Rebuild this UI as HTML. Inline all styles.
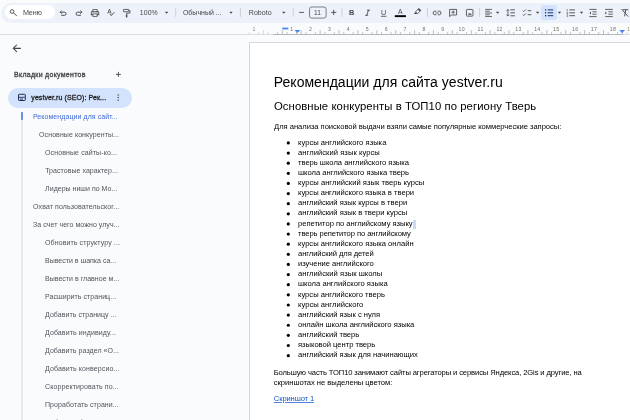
<!DOCTYPE html>
<html lang="ru"><head><meta charset="utf-8"><title>yestver.ru (SEO): Рекомендации</title>
<style>
html,body{margin:0;padding:0}
body{width:630px;height:420px;overflow:hidden;position:relative;background:#f9fbfd;font-family:"Liberation Sans",sans-serif;}
.t{position:absolute;white-space:nowrap;display:block}
#toolbar{position:absolute;left:0.5px;top:3px;width:640px;height:20px;border-radius:10px;background:#edf2fa}
#menu{position:absolute;left:4.5px;top:5px;width:50px;height:14px;border-radius:7px;background:#fff}
#rline{position:absolute;left:0;top:34px;width:630px;height:1px;background:#dadce0}
#rline2{position:absolute;left:273px;top:34px;width:349px;height:1px;background:#b4b8bc}
#page{position:absolute;left:249px;top:42px;width:400px;height:400px;background:#fff;border:1px solid #d4d7db;box-sizing:border-box}
#pill{position:absolute;left:8px;top:87.5px;width:124px;height:20px;border-radius:10px;background:#d3e3fd}
#vline{position:absolute;left:21px;top:112px;width:1.5px;height:320px;background:#e6e9ee}
#vact{position:absolute;left:21px;top:112.2px;width:1.6px;height:8.3px;background:#6f8fe6;border-radius:.5px}
#actbtn{position:absolute;left:541.4px;top:4.8px;width:15.3px;height:15.2px;border-radius:2px;background:#d3e3fd}
#cursor{position:absolute;left:412.6px;top:219.5px;width:3.4px;height:9px;background:#c9dbf8}
svg{position:absolute;left:0;top:0;overflow:visible}
</style></head><body>
<div id="all" style="position:absolute;left:0;top:0;width:630px;height:420px;overflow:hidden;will-change:transform">
<div id="toolbar"></div><div id="menu"></div><div id="actbtn"></div>
<div id="rline"></div><div id="rline2"></div>
<div id="page"></div>
<div id="pill"></div><div id="vline"></div><div id="vact"></div>
<div id="cursor"></div>
<svg width="630" height="420" viewBox="0 0 630 420">
<path d="M249.29 32.2V34.5 M258.73 32.2V34.5 M263.45 30.2V34.5 M268.18 32.2V34.5 M627.09 32.2V34.5" stroke="#c9cdd1" stroke-width="0.7" fill="none"/>
<path d="M277.62 32.2V34.5 M282.34 30.2V34.5 M287.07 32.2V34.5 M296.51 32.2V34.5 M301.23 30.2V34.5 M305.96 32.2V34.5 M315.40 32.2V34.5 M320.12 30.2V34.5 M324.85 32.2V34.5 M334.29 32.2V34.5 M339.01 30.2V34.5 M343.74 32.2V34.5 M353.18 32.2V34.5 M357.90 30.2V34.5 M362.63 32.2V34.5 M372.07 32.2V34.5 M376.79 30.2V34.5 M381.52 32.2V34.5 M390.96 32.2V34.5 M395.68 30.2V34.5 M400.41 32.2V34.5 M409.85 32.2V34.5 M414.57 30.2V34.5 M419.30 32.2V34.5 M428.74 32.2V34.5 M433.46 30.2V34.5 M438.19 32.2V34.5 M447.63 32.2V34.5 M452.36 30.2V34.5 M457.08 32.2V34.5 M466.52 32.2V34.5 M471.25 30.2V34.5 M475.97 32.2V34.5 M485.41 32.2V34.5 M490.13 30.2V34.5 M494.86 32.2V34.5 M504.30 32.2V34.5 M509.02 30.2V34.5 M513.75 32.2V34.5 M523.19 32.2V34.5 M527.91 30.2V34.5 M532.64 32.2V34.5 M542.08 32.2V34.5 M546.81 30.2V34.5 M551.53 32.2V34.5 M560.97 32.2V34.5 M565.69 30.2V34.5 M570.42 32.2V34.5 M579.86 32.2V34.5 M584.59 30.2V34.5 M589.31 32.2V34.5 M598.75 32.2V34.5 M603.47 30.2V34.5 M608.20 32.2V34.5 M617.64 32.2V34.5 M622.37 30.2V34.5" stroke="#a3a7ab" stroke-width="0.7" fill="none"/>
<rect x="282.3" y="27.6" width="6" height="1.8" fill="#4a86f5"/>
<path d="M294.5 30.1H300.4L297.45 32.9Z" fill="#4a86f5"/>
<path d="M619.2 30.0H625.0L622.1 33.3Z" fill="#4a86f5"/>
<circle cx="288.3" cy="142.90" r="1.6" fill="#000"/><circle cx="288.3" cy="153.03" r="1.6" fill="#000"/><circle cx="288.3" cy="163.16" r="1.6" fill="#000"/><circle cx="288.3" cy="173.29" r="1.6" fill="#000"/><circle cx="288.3" cy="183.42" r="1.6" fill="#000"/><circle cx="288.3" cy="193.55" r="1.6" fill="#000"/><circle cx="288.3" cy="203.68" r="1.6" fill="#000"/><circle cx="288.3" cy="213.81" r="1.6" fill="#000"/><circle cx="288.3" cy="223.94" r="1.6" fill="#000"/><circle cx="288.3" cy="234.07" r="1.6" fill="#000"/><circle cx="288.3" cy="244.20" r="1.6" fill="#000"/><circle cx="288.3" cy="254.33" r="1.6" fill="#000"/><circle cx="288.3" cy="264.46" r="1.6" fill="#000"/><circle cx="288.3" cy="274.59" r="1.6" fill="#000"/><circle cx="288.3" cy="284.72" r="1.6" fill="#000"/><circle cx="288.3" cy="294.85" r="1.6" fill="#000"/><circle cx="288.3" cy="304.98" r="1.6" fill="#000"/><circle cx="288.3" cy="315.11" r="1.6" fill="#000"/><circle cx="288.3" cy="325.24" r="1.6" fill="#000"/><circle cx="288.3" cy="335.37" r="1.6" fill="#000"/><circle cx="288.3" cy="345.50" r="1.6" fill="#000"/><circle cx="288.3" cy="355.63" r="1.6" fill="#000"/>
<g fill="none" stroke="#444746" stroke-width="0.95" stroke-linecap="butt" stroke-linejoin="miter">
 <!-- search -->
 <circle cx="12.1" cy="11.5" r="1.85" stroke-width="0.9"/><path d="M13.5 12.9 L16.8 15.9" stroke-width="0.95"/>
 <!-- undo -->
 <path d="M61.7 10.6 L60.1 12.2 L61.7 13.8 M60.4 12.2 H64.5 A1.55 1.55 0 0 1 64.5 15.3 H61.2"/>
 <!-- redo -->
 <path d="M80.4 10.6 L82.0 12.2 L80.4 13.8 M81.7 12.2 H77.6 A1.55 1.55 0 0 0 77.6 15.3 H80.9"/>
 <!-- back arrow sidebar -->
 <path d="M20.9 48.35 H13.5 M16.9 44.75 L13.3 48.35 L16.9 51.95" stroke-width="1.05"/>
 <!-- plus sidebar -->
 <path d="M115.9 74.4 H120.9 M118.4 71.9 V76.9" stroke-width="0.9"/>
 <!-- minus / plus font size -->
 <path d="M299.2 12.4 H303.9 M331.1 12.4 H336.3 M333.7 9.8 V15" stroke-width="0.9"/>
</g>
<g fill="#444746" stroke="none">
 <!-- print -->
 <path transform="translate(89.95 8.0) scale(0.42)" d="M19 8h-1V3H6v5H5c-1.660 0-3 1.340-3 3v6h4v4h12v-4h4v-6c0-1.660-1.340-3-3-3zM8 5h8v3H8V5zm8 12v2H8v-4h8v2zm2-2v-2H6v2H4v-4c0-.550.450-1 1-1h14c.550 0 1 .450 1 1v4h-2z M17 11.500a1 1 0 1 0 2 0a1 1 0 1 0-2 0z"/>
 <!-- spellcheck -->
 <path transform="translate(106.5 8.0) scale(0.35)" d="M12.450 16h2.090L9.430 3H7.570L2.460 16h2.090l1.120-3h5.640l1.140 3zm-6.020-5L8.500 5.480 10.570 11H6.430zm15.160.590l-8.090 8.090L9.830 16l-1.410 1.410 5.090 5.090L23 13l-1.410-1.410z"/>
 <!-- dropdown arrows -->
 <path d="M164.9 11.8h3.4l-1.700 1.900z M229.3 11.800h3.400l-1.700 1.900z M282.100 11.800h3.400l-1.700 1.900z M495.900 11.800h3.400l-1.700 1.900z M535.900 11.800h3.400l-1.700 1.900z M557.800 11.800h3.400l-1.700 1.900z M579.800 11.800h3.400l-1.700 1.900z"/>
 <!-- link -->
 
 <!-- three dots -->
 <circle cx="118.2" cy="94.9" r="0.75"/><circle cx="118.2" cy="97.6" r="0.75"/><circle cx="118.200" cy="100.3" r="0.75"/>
</g>
<!-- separators -->
<g stroke="#c7c7c7" stroke-width="0.8">
 <path d="M175.700 7.900V16.800 M240.400 7.900V16.800 M293.200 7.900V16.800 M341.900 7.900V16.800 M427.500 7.900V16.800 M479.600 7.900V16.800"/>
</g>
<!-- text format icons -->
<g font-family="Liberation Sans, sans-serif" fill="#444746">
 <text x="351.7" y="15.2" font-size="7.3" font-weight="700" text-anchor="middle">B</text>
 <text x="383.6" y="14.7" font-size="7.2" text-anchor="middle">U</text>
 <text x="400.3" y="14.0" font-size="6.8" text-anchor="middle">A</text>
</g>
<g fill="none" stroke="#444746" stroke-width="0.9">
 <!-- format paint -->
 <rect x="123.400" y="9.450" width="5.400" height="2.300" rx="0.4" stroke-width="0.85"/><path d="M128.800 10.600H130.000V13.100H126.600V14.300" stroke-width="0.8"/><rect x="125.900" y="14.300" width="1.450" height="3.200" rx="0.5" fill="#444746" stroke="none"/>
 <!-- italic -->
 <path d="M367.000 10.200H370.000 M365.200 15.300H368.200 M368.500 10.200L366.700 15.300"/>
 <path d="M436.300 11.100h-1.300a1.850 1.850 0 0 0 0 3.700h1.300 M437.800 11.100h1.300a1.850 1.850 0 0 1 0 3.700h-1.300 M435.500 12.950h3.100" stroke-width="0.85"/>
 <!-- underline bar -->
 <path d="M380.900 16.300H386.400" stroke-width="0.8"/>
 <!-- highlighter -->
 <path d="M415.600 11.600 L418.900 8.400 L420.900 10.400 L417.600 13.600 Z" stroke-width="0.75"/><path d="M417.700 9.500 L418.900 8.400 L420.900 10.400 L419.800 11.500 Z M415.400 11.900 L417.400 13.900 L413.900 14.100 Z" fill="#444746" stroke="none"/>
 <!-- add comment -->
 <path d="M449.600 9.400 H456.600 V15.000 H451.400 L449.600 16.600 Z" stroke-width="0.85"/>
 <path d="M451.500 12.200 H454.900 M453.200 10.500 V13.900" stroke-width="0.8"/>
 <!-- image -->
 <rect x="466.450" y="9.450" width="6.500" height="6.700" rx="0.8" stroke-width="0.85"/>
 <path d="M467.800 14.700 L469.100 13.100 L470.000 14.100 L470.800 13.300 L471.800 14.700 Z" fill="#444746" stroke="none"/>
 <!-- align left -->
 <path d="M485.200 9.400H492.000 M485.200 11.200H489.800 M485.200 13.000H492.000 M485.200 14.800H489.800 M485.200 16.500H492.000" stroke-width="0.8"/>
 <!-- line spacing -->
 <path d="M510.400 9.800H514.900 M510.400 12.800H514.900 M510.400 15.800H514.900" stroke-width="0.9"/>
 <path d="M507.900 9.600V16.000 M506.600 10.900L507.900 9.500L509.200 10.900 M506.600 14.700L507.900 16.100L509.200 14.700" stroke-width="0.8"/>
 <!-- checklist -->
 <path d="M527.700 10.700H531.300 M527.700 14.700H531.300" stroke-width="0.9"/>
 <path d="M522.800 10.600L523.800 11.600L526.000 9.400 M522.800 14.600L523.800 15.600L526.000 13.400" stroke-width="0.8"/>
 <!-- numbered list -->
 <path d="M569.400 9.900H575.000 M569.400 12.800H575.000 M569.400 15.700H575.000" stroke-width="0.9"/>
 <path d="M567.200 8.900V11.000 M566.600 12.000H567.700V13.600H566.600 M566.600 14.700H567.700V16.600H566.600" stroke-width="0.55"/>
 <!-- decrease indent -->
 <path d="M589.400 9.400H596.600 M592.400 11.800H596.600 M592.400 14.200H596.600 M589.400 16.600H596.600" stroke-width="0.85"/>
 <path d="M591.000 11.600L589.500 13.000L591.000 14.400Z" fill="#444746" stroke="none"/>
 <!-- increase indent -->
 <path d="M605.200 9.400H612.800 M608.400 11.800H612.800 M608.400 14.200H612.800 M605.200 16.600H612.800" stroke-width="0.85"/>
 <path d="M605.300 11.600L606.800 13.000L605.300 14.400Z" fill="#444746" stroke="none"/>
 <!-- clear formatting -->
 <path d="M623.000 9.700H628.300 M625.800 9.700L624.600 16.300 M621.500 9.000L628.200 16.600" stroke-width="0.9"/>
</g>
<!-- bulleted list (active) -->
<g fill="none" stroke="#041e49" stroke-width="0.9">
 <path d="M547.700 9.900H553.200 M547.700 12.800H553.200 M547.700 15.700H553.200"/>
 <g fill="#041e49" stroke="none"><circle cx="545.6" cy="9.900" r="0.7"/><circle cx="545.600" cy="12.800" r="0.7"/><circle cx="545.600" cy="15.700" r="0.7"/></g>
</g>
<rect x="309.5" y="7.0" width="16.6" height="11.1" rx="2.2" fill="none" stroke="#5f6368" stroke-width="0.8"/>
<!-- text color bar -->
<rect x="394.800" y="15.200" width="11.100" height="1.900" fill="#000"/>
<!-- tab icon in pill -->
<g fill="none" stroke="#1b2f55" stroke-width="0.9">
 <rect x="18.500" y="94.300" width="6.800" height="6.200" rx="0.7" stroke-width="1"/>
 <path d="M19.000 97.300H24.800 M19.800 99.100H23.000" stroke-width="0.9"/>
</g>
</svg>
<div id="txt">
<span class="t" style="left:273.80px;top:73px;font-size:14.0px;line-height:18px;color:#000;letter-spacing:0.019px;">Рекомендации для сайта yestver.ru</span>
<span class="t" style="left:274.00px;top:99px;font-size:11.3px;line-height:15px;color:#000;letter-spacing:0.078px;">Основные конкуренты в ТОП10 по региону Тверь</span>
<span class="t" style="left:274.10px;top:122px;font-size:7.6px;line-height:10px;color:#000;letter-spacing:-0.035px;">Для анализа поисковой выдачи взяли самые популярные коммерческие запросы:</span>
<span class="t" style="left:298.00px;top:138px;font-size:7.6px;line-height:10px;color:#000;letter-spacing:0.027px;">курсы английского языка</span>
<span class="t" style="left:298.00px;top:148px;font-size:7.6px;line-height:10px;color:#000;letter-spacing:0.051px;">английский язык курсы</span>
<span class="t" style="left:298.00px;top:158px;font-size:7.6px;line-height:10px;color:#000;letter-spacing:-0.011px;">тверь школа английского языка</span>
<span class="t" style="left:298.00px;top:168px;font-size:7.6px;line-height:10px;color:#000;letter-spacing:-0.011px;">школа английского языка тверь</span>
<span class="t" style="left:298.00px;top:178px;font-size:7.6px;line-height:10px;color:#000;letter-spacing:0.028px;">курсы английский язык тверь курсы</span>
<span class="t" style="left:298.00px;top:188px;font-size:7.6px;line-height:10px;color:#000;letter-spacing:-0.001px;">курсы английского языка в твери</span>
<span class="t" style="left:298.00px;top:198px;font-size:7.6px;line-height:10px;color:#000;letter-spacing:0.003px;">английский язык курсы в твери</span>
<span class="t" style="left:298.00px;top:208px;font-size:7.6px;line-height:10px;color:#000;letter-spacing:0.003px;">английский язык в твери курсы</span>
<span class="t" style="left:298.00px;top:219px;font-size:7.6px;line-height:10px;color:#000;letter-spacing:-0.029px;">репетитор по английскому языку</span>
<span class="t" style="left:298.00px;top:229px;font-size:7.6px;line-height:10px;color:#000;letter-spacing:-0.075px;">тверь репетитор по английскому</span>
<span class="t" style="left:298.00px;top:239px;font-size:7.6px;line-height:10px;color:#000;letter-spacing:0.007px;">курсы английского языка онлайн</span>
<span class="t" style="left:298.00px;top:249px;font-size:7.6px;line-height:10px;color:#000;letter-spacing:-0.065px;">английский для детей</span>
<span class="t" style="left:298.00px;top:259px;font-size:7.6px;line-height:10px;color:#000;letter-spacing:-0.044px;">изучение английского</span>
<span class="t" style="left:298.00px;top:269px;font-size:7.6px;line-height:10px;color:#000;letter-spacing:0.034px;">английский язык школы</span>
<span class="t" style="left:298.00px;top:279px;font-size:7.6px;line-height:10px;color:#000;letter-spacing:0.013px;">школа английского языка</span>
<span class="t" style="left:298.00px;top:290px;font-size:7.6px;line-height:10px;color:#000;letter-spacing:0.002px;">курсы английского тверь</span>
<span class="t" style="left:298.00px;top:300px;font-size:7.6px;line-height:10px;color:#000;letter-spacing:0.023px;">курсы английского</span>
<span class="t" style="left:298.00px;top:310px;font-size:7.6px;line-height:10px;color:#000;letter-spacing:-0.014px;">английский язык с нуля</span>
<span class="t" style="left:298.00px;top:320px;font-size:7.6px;line-height:10px;color:#000;letter-spacing:-0.023px;">онлайн школа английского языка</span>
<span class="t" style="left:298.00px;top:330px;font-size:7.6px;line-height:10px;color:#000;letter-spacing:-0.018px;">английский тверь</span>
<span class="t" style="left:298.00px;top:340px;font-size:7.6px;line-height:10px;color:#000;letter-spacing:-0.017px;">языковой центр тверь</span>
<span class="t" style="left:298.00px;top:350px;font-size:7.6px;line-height:10px;color:#000;letter-spacing:-0.009px;">английский язык для начинающих</span>
<span class="t" style="left:273.70px;top:368px;font-size:7.6px;line-height:10px;color:#000;letter-spacing:-0.109px;">Большую часть ТОП10 занимают сайты агрегаторы и сервисы Яндекса, 2Gis и другие, на</span>
<span class="t" style="left:273.80px;top:378px;font-size:7.6px;line-height:10px;color:#000;letter-spacing:-0.034px;">скриншотах не выделены цветом:</span>
<span class="t" style="left:273.80px;top:394px;font-size:7.6px;line-height:10px;color:#1155cc;letter-spacing:-0.114px;text-decoration:underline;text-underline-offset:0.6px;text-decoration-thickness:0.6px;text-decoration-color:#5583dc;">Скриншот 1</span>
<span class="t" style="left:14.00px;top:70px;font-size:7.0px;line-height:9px;color:#444746;letter-spacing:0.287px;-webkit-text-stroke:0.3px #444746;">Вкладки документов</span>
<span class="t" style="left:31.30px;top:93px;font-size:7.0px;line-height:9px;color:#1f1f1f;letter-spacing:0.088px;-webkit-text-stroke:0.3px #1f1f1f;">yestver.ru (SEO): Рек...</span>
<span class="t" style="left:32.90px;top:112px;font-size:7.0px;line-height:9px;color:#406ad6;letter-spacing:0.075px;">Рекомендации для сайт...</span>
<span class="t" style="left:39.10px;top:130px;font-size:7.0px;line-height:9px;color:#50545a;letter-spacing:0.075px;">Основные конкуренты...</span>
<span class="t" style="left:45.00px;top:148px;font-size:7.0px;line-height:9px;color:#50545a;letter-spacing:0.110px;">Основные сайты-ко...</span>
<span class="t" style="left:45.20px;top:166px;font-size:7.0px;line-height:9px;color:#50545a;letter-spacing:0.049px;">Трастовые характер...</span>
<span class="t" style="left:45.10px;top:184px;font-size:7.0px;line-height:9px;color:#50545a;letter-spacing:0.016px;">Лидеры ниши по Мо...</span>
<span class="t" style="left:33.10px;top:202px;font-size:7.0px;line-height:9px;color:#50545a;letter-spacing:0.102px;">Охват пользовательског...</span>
<span class="t" style="left:33.10px;top:220px;font-size:7.0px;line-height:9px;color:#50545a;letter-spacing:0.052px;">За счет чего можно улуч...</span>
<span class="t" style="left:45.00px;top:238px;font-size:7.0px;line-height:9px;color:#50545a;letter-spacing:0.109px;">Обновить структуру ...</span>
<span class="t" style="left:45.00px;top:256px;font-size:7.0px;line-height:9px;color:#50545a;letter-spacing:0.007px;">Вывести в шапка са...</span>
<span class="t" style="left:45.00px;top:274px;font-size:7.0px;line-height:9px;color:#50545a;letter-spacing:0.022px;">Вывести в главное м...</span>
<span class="t" style="left:45.00px;top:292px;font-size:7.0px;line-height:9px;color:#50545a;letter-spacing:0.056px;">Расширить страниц...</span>
<span class="t" style="left:45.00px;top:310px;font-size:7.0px;line-height:9px;color:#50545a;letter-spacing:0.060px;">Добавить страницу ...</span>
<span class="t" style="left:45.00px;top:328px;font-size:7.0px;line-height:9px;color:#50545a;letter-spacing:0.100px;">Добавить индивиду...</span>
<span class="t" style="left:45.00px;top:346px;font-size:7.0px;line-height:9px;color:#50545a;letter-spacing:0.072px;">Добавить раздел «О...</span>
<span class="t" style="left:45.00px;top:364px;font-size:7.0px;line-height:9px;color:#50545a;letter-spacing:0.107px;">Добавить конверсио...</span>
<span class="t" style="left:45.00px;top:382px;font-size:7.0px;line-height:9px;color:#50545a;letter-spacing:0.114px;">Скорректировать по...</span>
<span class="t" style="left:45.00px;top:400px;font-size:7.0px;line-height:9px;color:#50545a;letter-spacing:0.085px;">Проработать страни...</span>
<span class="t" style="left:45.00px;top:418px;font-size:7.0px;line-height:9px;color:#50545a;letter-spacing:0.109px;">Добавить блок с ...</span>
<span class="t" style="left:22.90px;top:8px;font-size:7.2px;line-height:9px;color:#444746;letter-spacing:-0.109px;">Меню</span>
<span class="t" style="left:139.80px;top:8px;font-size:6.9px;line-height:9px;color:#444746;letter-spacing:0.094px;">100%</span>
<span class="t" style="left:182.90px;top:8px;font-size:7.0px;line-height:9px;color:#444746;letter-spacing:0.007px;">Обычный ...</span>
<span class="t" style="left:248.80px;top:8px;font-size:7.0px;line-height:9px;color:#444746;letter-spacing:0.054px;">Roboto</span>
<span class="t" style="left:313.90px;top:8px;font-size:6.6px;line-height:9px;color:#444746;letter-spacing:0.240px;">11</span>
<span class="t" style="left:252.41px;top:26px;font-size:5.2px;line-height:7px;color:#8a857a;letter-spacing:0.309px;">1</span>
<span class="t" style="left:290.19px;top:26px;font-size:5.2px;line-height:7px;color:#7a7468;letter-spacing:0.309px;">1</span>
<span class="t" style="left:309.08px;top:26px;font-size:5.2px;line-height:7px;color:#7a7468;letter-spacing:0.309px;">2</span>
<span class="t" style="left:327.97px;top:26px;font-size:5.2px;line-height:7px;color:#7a7468;letter-spacing:0.309px;">3</span>
<span class="t" style="left:346.86px;top:26px;font-size:5.2px;line-height:7px;color:#7a7468;letter-spacing:0.309px;">4</span>
<span class="t" style="left:365.75px;top:26px;font-size:5.2px;line-height:7px;color:#7a7468;letter-spacing:0.309px;">5</span>
<span class="t" style="left:384.64px;top:26px;font-size:5.2px;line-height:7px;color:#7a7468;letter-spacing:0.309px;">6</span>
<span class="t" style="left:403.53px;top:26px;font-size:5.2px;line-height:7px;color:#7a7468;letter-spacing:0.309px;">7</span>
<span class="t" style="left:422.42px;top:26px;font-size:5.2px;line-height:7px;color:#7a7468;letter-spacing:0.309px;">8</span>
<span class="t" style="left:441.31px;top:26px;font-size:5.2px;line-height:7px;color:#7a7468;letter-spacing:0.309px;">9</span>
<span class="t" style="left:458.60px;top:26px;font-size:5.2px;line-height:7px;color:#7a7468;letter-spacing:0.309px;">10</span>
<span class="t" style="left:477.49px;top:26px;font-size:5.2px;line-height:7px;color:#7a7468;letter-spacing:0.505px;">11</span>
<span class="t" style="left:496.38px;top:26px;font-size:5.2px;line-height:7px;color:#7a7468;letter-spacing:0.309px;">12</span>
<span class="t" style="left:515.27px;top:26px;font-size:5.2px;line-height:7px;color:#7a7468;letter-spacing:0.309px;">13</span>
<span class="t" style="left:534.16px;top:26px;font-size:5.2px;line-height:7px;color:#7a7468;letter-spacing:0.309px;">14</span>
<span class="t" style="left:553.05px;top:26px;font-size:5.2px;line-height:7px;color:#7a7468;letter-spacing:0.309px;">15</span>
<span class="t" style="left:571.94px;top:26px;font-size:5.2px;line-height:7px;color:#7a7468;letter-spacing:0.309px;">16</span>
<span class="t" style="left:590.83px;top:26px;font-size:5.2px;line-height:7px;color:#7a7468;letter-spacing:0.309px;">17</span>
<span class="t" style="left:609.72px;top:26px;font-size:5.2px;line-height:7px;color:#7a7468;letter-spacing:0.309px;">18</span>
<span class="t" style="left:627.00px;top:26px;font-size:5.2px;line-height:7px;color:#a08a50;letter-spacing:0.109px;">1</span>
</div>
</div>
</body></html>
